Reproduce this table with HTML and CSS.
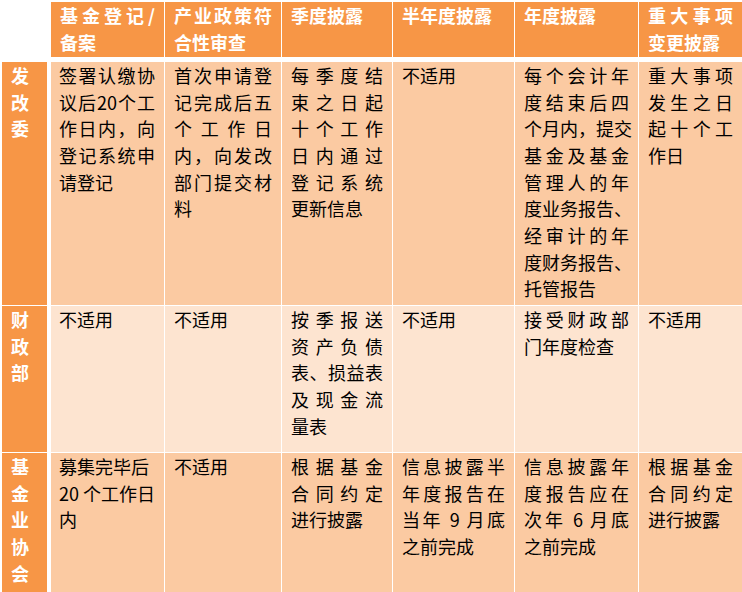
FILE: index.html
```html
<!DOCTYPE html>
<html lang="zh-CN">
<head>
<meta charset="utf-8">
<title>信息披露要求对照表</title>
<link rel="stylesheet" href="styles.css">
</head>
<body>
<div class="sheet">
  <div class="grid">
    <div class="corner"></div>
    <div class="hd"><span class="l j">基金登记/</span><span class="l">备案</span></div>
    <div class="hd"><span class="l j">产业政策符</span><span class="l">合性审查</span></div>
    <div class="hd"><span class="l">季度披露</span></div>
    <div class="hd"><span class="l">半年度披露</span></div>
    <div class="hd"><span class="l">年度披露</span></div>
    <div class="hd"><span class="l j">重大事项</span><span class="l">变更披露</span></div>

    <div class="rh"><span class="l">发</span><span class="l">改</span><span class="l">委</span></div>
    <div class="c odd c2"><span class="l j">签署认缴协</span><span class="l j">议后20个工</span><span class="l j">作日内，向</span><span class="l j">登记系统申</span><span class="l">请登记</span></div>
    <div class="c odd"><span class="l j">首次申请登</span><span class="l j">记完成后五</span><span class="l j">个工作日</span><span class="l j">内，向发改</span><span class="l j">部门提交材</span><span class="l">料</span></div>
    <div class="c odd"><span class="l j">每季度结</span><span class="l j">束之日起</span><span class="l j">十个工作</span><span class="l j">日内通过</span><span class="l j">登记系统</span><span class="l">更新信息</span></div>
    <div class="c odd"><span class="l">不适用</span></div>
    <div class="c odd"><span class="l j">每个会计年</span><span class="l j">度结束后四</span><span class="l">个月内，提交</span><span class="l j">基金及基金</span><span class="l j">管理人的年</span><span class="l">度业务报告、</span><span class="l j">经审计的年</span><span class="l">度财务报告、</span><span class="l">托管报告</span></div>
    <div class="c odd"><span class="l j">重大事项</span><span class="l j">发生之日</span><span class="l j">起十个工</span><span class="l">作日</span></div>

    <div class="rh"><span class="l">财</span><span class="l">政</span><span class="l">部</span></div>
    <div class="c even c2"><span class="l">不适用</span></div>
    <div class="c even"><span class="l">不适用</span></div>
    <div class="c even"><span class="l j">按季报送</span><span class="l j">资产负债</span><span class="l j">表、损益表</span><span class="l j">及现金流</span><span class="l">量表</span></div>
    <div class="c even"><span class="l">不适用</span></div>
    <div class="c even"><span class="l j">接受财政部</span><span class="l">门年度检查</span></div>
    <div class="c even"><span class="l">不适用</span></div>

    <div class="rh"><span class="l">基</span><span class="l">金</span><span class="l">业</span><span class="l">协</span><span class="l">会</span></div>
    <div class="c odd c2"><span class="l">募集完毕后</span><span class="l">20 个工作日</span><span class="l">内</span></div>
    <div class="c odd"><span class="l">不适用</span></div>
    <div class="c odd"><span class="l j">根据基金</span><span class="l j">合同约定</span><span class="l">进行披露</span></div>
    <div class="c odd"><span class="l j">信息披露半</span><span class="l j">年度报告在</span><span class="l j">当年 9 月底</span><span class="l">之前完成</span></div>
    <div class="c odd"><span class="l j">信息披露年</span><span class="l j">度报告应在</span><span class="l j">次年 6 月底</span><span class="l">之前完成</span></div>
    <div class="c odd"><span class="l j">根据基金</span><span class="l j">合同约定</span><span class="l">进行披露</span></div>
  </div>
</div>
</body>
</html>
```

FILE: styles.css
```css
html, body {
  margin: 0;
  padding: 0;
  overflow: hidden;
  background: #ffffff;
}

body {
  font-family: "Noto Sans CJK SC", "Noto Sans", sans-serif;
  font-size: 18px;
  line-height: 26.67px;
  color: #000000;
}

.sheet {
  padding: 2px 0 0 2px;
}

.grid {
  display: grid;
  grid-template-columns: 48px 113px 116px 110px 121px 123px 103px;
  grid-template-rows: 59px 243px 146px 139px;
  gap: 1px;
}

.corner {
  margin: 0 3px 4px 0;
}

.hd {
  background: #f79646;
  color: #ffffff;
  font-weight: 700;
  margin-bottom: 4px;
  padding: 0 9px;
}

.rh {
  background: #f79646;
  color: #ffffff;
  font-weight: 700;
  margin-right: 3px;
  padding: 0 9px;
}

.c {
  padding: 0 9px;
}

.c2 {
  padding-left: 8px;
}

.odd {
  background: #fbcaa2;
}

.even {
  background: #fde4d0;
}

.l {
  display: block;
  white-space: nowrap;
}

.j {
  text-align: justify;
  text-align-last: justify;
}
```
